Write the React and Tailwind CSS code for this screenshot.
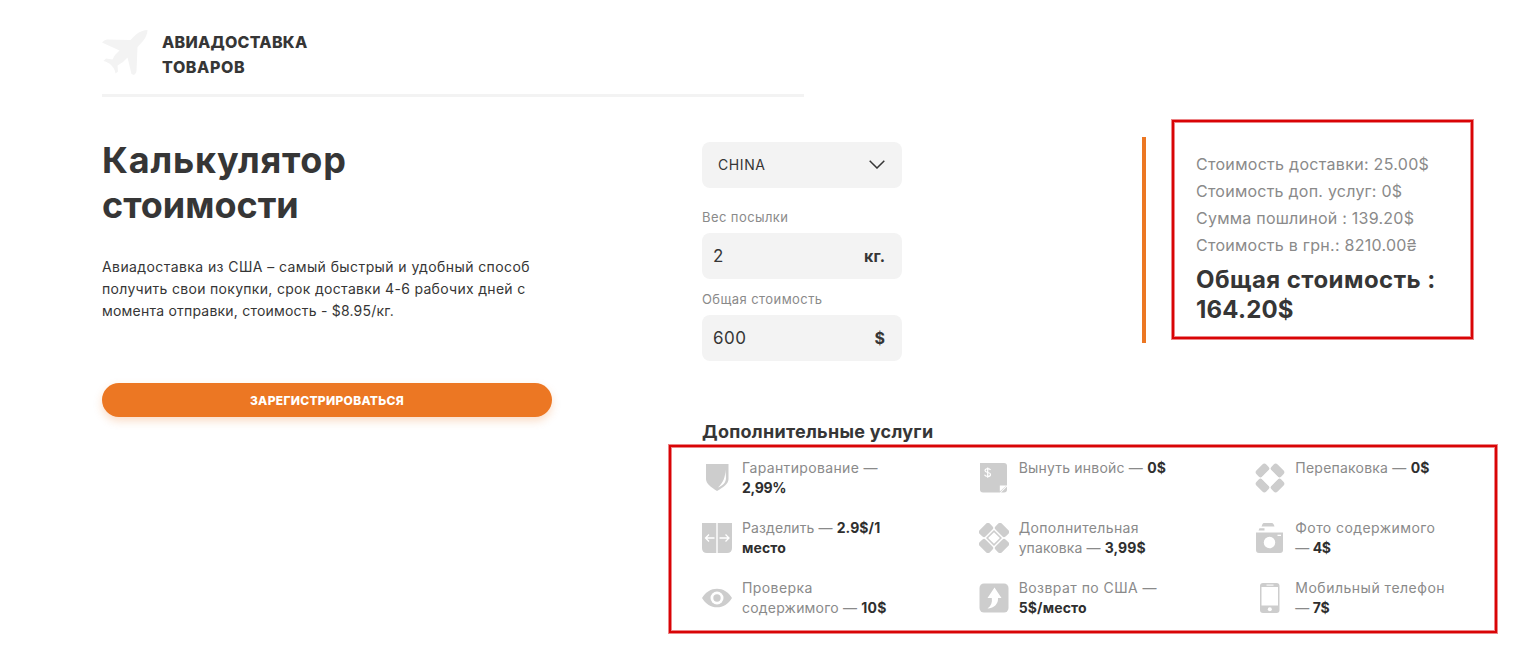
import { useState } from "react"

const totals = [
    { text: "Стоимость доставки: 25.00$", spacing: "tracking-[0.3px]" },
    { text: "Стоимость доп. услуг: 0$", spacing: "tracking-[0.24px]" },
    { text: "Сумма пошлиной : 139.20$", spacing: "tracking-[0.24px]" },
    { text: "Стоимость в грн.: 8210.00₴", spacing: "tracking-[0.26px]" },
]

const services = [
    {
        icon: ShieldIcon,
        lines: [
            { name: "Гарантирование —", spacing: "tracking-[0.35px]" },
            { price: "2,99%", spacing: "tracking-[-0.3px]" },
        ],
    },
    { icon: InvoiceIcon, lines: [{ name: "Вынуть инвойс — ", price: "0$", spacing: "tracking-[0.2px]" }] },
    { icon: RepackIcon, lines: [{ name: "Перепаковка — ", price: "0$", spacing: "tracking-[0.22px]" }] },
    {
        icon: SplitIcon,
        lines: [
            { name: "Разделить — ", price: "2.9$/1", spacing: "tracking-[0.1px]" },
            { price: "место", spacing: "tracking-[0.1px]" },
        ],
    },
    {
        icon: ExtraPackIcon,
        lines: [
            { name: "Дополнительная", spacing: "tracking-[0.35px]" },
            { name: "упаковка — ", price: "3,99$", spacing: "tracking-[0.1px]" },
        ],
    },
    {
        icon: CameraIcon,
        lines: [
            { name: "Фото содержимого", spacing: "tracking-[0.42px]" },
            { name: "— ", price: "4$", spacing: "tracking-[-0.3px]" },
        ],
    },
    {
        icon: EyeIcon,
        lines: [
            { name: "Проверка", spacing: "tracking-[0.4px]" },
            { name: "содержимого — ", price: "10$", spacing: "tracking-[0.2px]" },
        ],
    },
    {
        icon: ReturnIcon,
        lines: [
            { name: "Возврат по США —", spacing: "tracking-[0.45px]" },
            { price: "5$/место", spacing: "tracking-[0.15px]" },
        ],
    },
    {
        icon: PhoneIcon,
        lines: [
            { name: "Мобильный телефон", spacing: "tracking-[0.5px]" },
            { name: "— ", price: "7$", spacing: "tracking-[-0.3px]" },
        ],
    },
]

function PlaneIcon() {
    return (
        <svg className="w-[46px] h-[46px] shrink-0" viewBox="0 0 46 46" fill="#f3f3f3">
            <path d="M45.5 0C42 0 37.5 1.500 34 4.500L28.500 10L5 9.500Q2 10 0 12.500L17.500 20.500Q13 24 10.500 29.500L4 28.500L1.500 31Q7 32.500 9.500 35.500Q12.500 38 13.500 43.500L16 41.500L15.500 35.500Q21 33 25.500 27.500L29.500 44L32 45Q34.500 43.500 34.500 41L35.500 17L41 11C44 7.500 45.500 3 45.500 0Z" />
        </svg>
    )
}

function ShieldIcon() {
    return (
        <svg className="w-[30px] h-[30px]" viewBox="0 0 30 30">
            <path d="M4 1H26.500V16C26.500 21 21 24.500 15 28C9.500 24.500 4 21 4 16Z" fill="#cdcdcd" />
            <path d="M23.500 6.500C23.500 14 21 20 16 24.500C21 22.500 24 19.500 24 15Z" fill="#fff" />
        </svg>
    )
}

function InvoiceIcon() {
    return (
        <svg className="w-[30px] h-[30px]" viewBox="0 0 30 30">
            <path d="M1 0H25Q28 0 28 3V22L21 29.500H4Q1 29.500 1 26.500Z" fill="#cdcdcd" />
            <path d="M22 29.500H25Q28 29.500 28 26.500V23.500Z" fill="#cdcdcd" />
            <path d="M20.800 28.500V22.500H27.500Z" fill="#fff" />
            <path d="M11.500 7C11 6 10 5.700 8.800 5.700C7.200 5.700 6 6.500 6 7.600C6 10.200 11.500 8.800 11.500 11.500C11.500 12.800 10.200 13.500 8.700 13.500C7.200 13.500 6 12.900 5.500 11.800M8.700 4.500V14.700" fill="none" stroke="#fff" strokeWidth="1.200" />
        </svg>
    )
}

function RepackIcon() {
    return (
        <svg className="w-[30px] h-[30px]" viewBox="0 0 30 30" fill="#cdcdcd">
            <g transform="translate(15 15) rotate(45)">
                <rect x="-6.900" y="-14.900" width="13.800" height="8.600" rx="2.800" />
                <rect x="-6.900" y="6.300" width="13.800" height="8.600" rx="2.800" />
                <rect x="-14.900" y="-6.900" width="8.600" height="13.800" rx="2.800" />
                <rect x="6.300" y="-6.900" width="8.600" height="13.800" rx="2.800" />
                <rect x="-6.500" y="-6.500" width="13" height="13" fill="#fff" />
            </g>
        </svg>
    )
}

function SplitIcon() {
    return (
        <svg className="w-[30px] h-[30px]" viewBox="0 0 30 30">
            <path d="M0 0H14.300V30H5Q0 30 0 25ZM15.700 0H30V25Q30 30 25 30H15.700Z" fill="#cdcdcd" />
            <path d="M12.500 15H3.500M7 11.500L3.500 15L7 18.500M17.500 15H27M23.500 11.500L27 15L23.500 18.500" fill="none" stroke="#fff" strokeWidth="1.300" />
        </svg>
    )
}

function ExtraPackIcon() {
    return (
        <svg className="w-[30px] h-[30px]" viewBox="0 0 30 30" fill="#cdcdcd">
            <g transform="translate(15 15) rotate(45)">
                <rect x="-7.200" y="-15.700" width="14.400" height="9" rx="2.800" />
                <rect x="-7.200" y="6.700" width="14.400" height="9" rx="2.800" />
                <rect x="-15.700" y="-7.200" width="9" height="14.400" rx="2.800" />
                <rect x="6.700" y="-7.200" width="9" height="14.400" rx="2.800" />
                <rect x="-7" y="-7" width="14" height="14" fill="#fff" />
                <rect x="-4.900" y="-4.900" width="9.800" height="9.800" fill="#fff" stroke="#cdcdcd" strokeWidth="1.500" />
            </g>
        </svg>
    )
}

function CameraIcon() {
    return (
        <svg className="w-[30px] h-[30px]" viewBox="0 0 30 30" fill="#cdcdcd">
            <path d="M8.500 0H17Q18.500 0 19.500 3.500H6.500Q7.500 0 8.500 0ZM4.500 5.300H9.500V7.500H3.500ZM1 9.500H28V27Q28 30 25 30H4Q1 30 1 27Z" />
            <circle cx="14.500" cy="19.500" r="5.700" fill="#fff" />
            <path d="M22.500 11.700H26V13H22.500Z" fill="#fff" />
        </svg>
    )
}

function EyeIcon() {
    return (
        <svg className="w-[30px] h-[30px]" viewBox="0 0 30 30" fill="#cdcdcd">
            <path d="M0 15C3.500 9 9 5.700 15 5.700S26.500 9 30 15C26.500 21 21 24.300 15 24.300S3.500 21 0 15Z" />
            <circle cx="15" cy="15" r="6.500" fill="#fff" />
            <circle cx="15" cy="15" r="3.700" />
        </svg>
    )
}

function ReturnIcon() {
    return (
        <svg className="w-[30px] h-[30px]" viewBox="0 0 30 30">
            <rect x="0.500" y="0.500" width="29" height="29" rx="4.500" fill="#cdcdcd" />
            <path d="M15.500 4.500L22.500 15H19C19.500 20.500 15.500 25 8.500 25.500C12 23 13.500 19.500 12.800 15H8.500Z" fill="#fff" />
        </svg>
    )
}

function PhoneIcon() {
    return (
        <svg className="w-[30px] h-[30px]" viewBox="0 0 30 30">
            <rect x="5" y="0" width="19.500" height="30" rx="3" fill="#cdcdcd" />
            <rect x="6.500" y="4" width="16.500" height="18.500" fill="#fff" />
            <rect x="11.500" y="1.600" width="7" height="1" fill="#fff" />
            <circle cx="14.800" cy="26.200" r="2" fill="#fff" />
        </svg>
    )
}

function Service({ icon: Icon, lines }) {
    return (
        <div className="flex h-[60px]">
            <div className="w-10 shrink-0 pt-[5px]">
                <Icon />
            </div>
            <div className="text-[14px] leading-5 whitespace-pre text-[#8a8a8a]">
                {lines.map((line, i) => (
                    <div key={i} className={line.spacing}>
                        {line.name}
                        <b className="font-bold text-[#2f2f2f]">{line.price}</b>
                    </div>
                ))}
            </div>
        </div>
    )
}

function Field({ label, unit, value, onChange, className }) {
    return (
        <label className={`block ${className}`}>
            <span className="block h-5 text-[13px] leading-5 tracking-[0.42px] text-[#8a8a8a]">{label}</span>
            <span className="flex h-[46px] mt-[6px] items-center rounded-lg bg-[#f3f3f3] pl-[11px] pr-[17px]">
                <input
                    className="w-24 bg-transparent pt-0.5 text-[17px] tracking-[0.5px] outline-none"
                    value={value}
                    onChange={(e) => onChange(e.target.value)}
                />
                <b className="ml-auto pb-px text-[16px] leading-6 font-bold">{unit}</b>
            </span>
        </label>
    )
}

export default function App() {
    const [weight, setWeight] = useState("2")
    const [cost, setCost] = useState("600")

    return (
        <div className="relative h-[663px] w-[1528px] overflow-hidden bg-white pl-[102px] font-['Inter','Noto_Sans',sans-serif] text-[#363636]">
            <header className="flex h-[97px] w-[702px] border-b-[3px] border-[#f3f3f3] pt-[30px]">
                <PlaneIcon />
                <div className="ml-[14px] text-[16px] leading-[25px] font-extrabold">
                    <div className="tracking-[0.25px]">АВИАДОСТАВКА</div>
                    <div className="tracking-[0.6px]">ТОВАРОВ</div>
                </div>
            </header>

            <main className="flex">
                <section className="w-[450px] shrink-0 pt-[41px]">
                    <h1 className="text-[36px] leading-[45px] font-bold">
                        <span className="block tracking-[0.8px]">Калькулятор</span>
                        <span className="block">стоимости</span>
                    </h1>
                    <p className="mt-[28px] text-[14px] leading-[22px] whitespace-nowrap">
                        <span className="block tracking-[0.41px]">Авиадоставка из США – самый быстрый и удобный способ</span>
                        <span className="block tracking-[0.31px]">получить свои покупки, срок доставки 4-6 рабочих дней с</span>
                        <span className="block tracking-[0.21px]">момента отправки, стоимость - $8.95/кг.</span>
                    </p>
                    <button className="mt-[61px] h-[34px] w-full rounded-full bg-[#ec7723] pt-px text-[12px] font-extrabold tracking-[0.3px] text-white shadow-[0_4px_8px_rgba(236,119,35,0.25)]">
                        ЗАРЕГИСТРИРОВАТЬСЯ
                    </button>
                </section>

                <section className="ml-[150px] w-[830px] shrink-0 pt-10">
                    <div className="flex h-[283px]">
                        <div className="w-[200px] pt-[5px]">
                            <div className="flex h-[46px] items-center justify-between rounded-lg bg-[#f3f3f3] pb-0.5 pl-4 pr-[17px] text-[14px] tracking-[0.6px]">
                                CHINA
                                <svg className="h-[9px] w-4" viewBox="0 0 16 9" fill="none" stroke="#363636" strokeWidth="1.500">
                                    <path d="M0.700 0.700L8 8L15.300 0.700" />
                                </svg>
                            </div>
                            <Field className="mt-[19px]" label="Вес посылки" unit="кг." value={weight} onChange={setWeight} />
                            <Field className="mt-[10px]" label="Общая стоимость" unit="$" value={cost} onChange={setCost} />
                        </div>
                        <div className="ml-[240px] h-[206px] border-l-4 border-[#ec7723] pt-[14px] pl-[50px] whitespace-nowrap">
                            {totals.map((row) => (
                                <div key={row.text} className={`text-[16px] leading-[27px] text-[#8a8a8a] ${row.spacing}`}>
                                    {row.text}
                                </div>
                            ))}
                            <div className="mt-[6px] text-[24px] leading-[30px] font-bold">
                                <div className="tracking-[0.45px]">Общая стоимость :</div>
                                <div className="tracking-[0.2px]">164.20$</div>
                            </div>
                        </div>
                    </div>

                    <h2 className="h-[38px] text-[18px] leading-6 font-bold tracking-[0.27px]">Дополнительные услуги</h2>
                    <div className="grid grid-cols-3">
                        {services.map((service, i) => (
                            <Service key={i} {...service} />
                        ))}
                    </div>
                </section>
            </main>

            {/* highlight frames over the totals and the services */}
            <div className="pointer-events-none absolute top-[120px] left-[1172px] h-[219px] w-[301px] border-2 border-[#d90406] shadow-[0_0_0_1px_#ec8587,inset_0_0_0_1px_#ec8587]" />
            <div className="pointer-events-none absolute top-[445px] left-[669px] h-[188px] w-[828px] border-2 border-[#d90406] shadow-[0_0_0_1px_#ec8587,inset_0_0_0_1px_#ec8587]" />
        </div>
    )
}
